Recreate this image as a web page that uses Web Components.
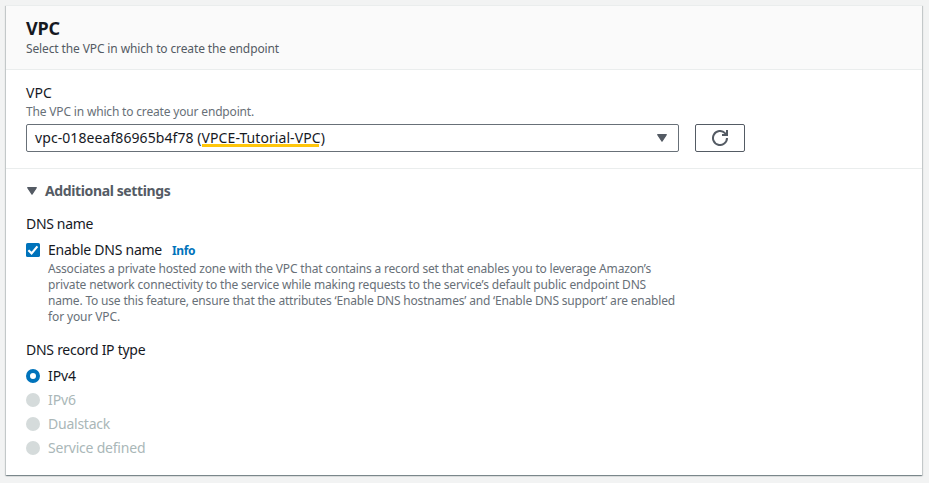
<!DOCTYPE html>
<html lang="en">
<head>
<meta charset="utf-8">
<title>VPC</title>
<style>
html, body { margin: 0; height: 100%; }
body { background: #f2f3f3; font: 14px/22px "Noto Sans", sans-serif; color: #16191f; box-sizing: border-box; padding: 5px 7px 8px 6px; overflow: hidden; }
</style>
</head>
<body>
<vpc-panel>
  <ui-text slot="title" style="--ls:-.2px;font-size:18px;font-weight:700">VPC</ui-text>
  <ui-text slot="subtitle" style="--ls:-.124px">Select the VPC in which to create the endpoint</ui-text>
  <form-field>
    <ui-text slot="label" style="--ls:.09px">VPC</ui-text>
    <ui-text slot="hint" style="--ls:-.172px">The VPC in which to create your endpoint.</ui-text>
    <select-box>
      <ui-text style="--ls:.08px">vpc-018eeaf86965b4f78 (</ui-text><mark-text><ui-text style="--ls:.071px">VPCE-Tutorial-VPC</ui-text></mark-text><ui-text>)</ui-text>
    </select-box>
    <refresh-button slot="action"></refresh-button>
  </form-field>
  <expand-section slot="more">
    <ui-text slot="heading" style="--ls:-.38px">Additional settings</ui-text>
    <option-group>
      <ui-text slot="label" style="--ls:-.336px">DNS name</ui-text>
      <check-option>
        <ui-text style="--ls:-.249px">Enable DNS name</ui-text>
        <ui-text slot="info" style="--ls:-.4px">Info</ui-text>
        <ui-text slot="hint" style="--ls:-.184px">Associates a private hosted zone with the VPC that contains a record set that enables you to leverage Amazon’s</ui-text>
        <ui-text slot="hint" style="--ls:-.169px">private network connectivity to the service while making requests to the service’s default public endpoint DNS</ui-text>
        <ui-text slot="hint" style="--ls:-.181px">name. To use this feature, ensure that the attributes ‘Enable DNS hostnames’ and ‘Enable DNS support’ are enabled</ui-text>
        <ui-text slot="hint" style="--ls:-.124px">for your VPC.</ui-text>
      </check-option>
    </option-group>
    <option-group>
      <ui-text slot="label" style="--ls:-.263px">DNS record IP type</ui-text>
      <radio-option checked><ui-text style="--ls:-.086px">IPv4</ui-text></radio-option>
      <radio-option disabled><ui-text style="--ls:-.086px">IPv6</ui-text></radio-option>
      <radio-option disabled><ui-text style="--ls:-.24px">Dualstack</ui-text></radio-option>
      <radio-option disabled><ui-text style="--ls:-.209px">Service defined</ui-text></radio-option>
    </option-group>
  </expand-section>
</vpc-panel>
<script>
const define = (name, html) => customElements.define(name, class extends HTMLElement {
  constructor() {
    super();
    this.attachShadow({ mode: 'open' }).innerHTML = html;
  }
});

define('ui-text', `<style>
:host { display: block; white-space: nowrap; letter-spacing: var(--ls, 0); }
</style><slot></slot>`);

define('vpc-panel', `<style>
:host { display: flex; flex-direction: column; height: 470px; box-sizing: border-box; background: #fff; border-top: 1px solid #eaeded;
  box-shadow: 0 1px 1px 0 rgba(0,28,36,.3), 1px 1px 1px 0 rgba(0,28,36,.15), -1px 1px 1px 0 rgba(0,28,36,.15); }
header { height: 63px; box-sizing: content-box; background: #fafafa; border-bottom: 1px solid #eaeded; }
.in { padding: 11px 20px 0; }
.sub { font-size: 12px; line-height: 16px; color: #545b64; padding-top: 2px; }
.body { padding: 12px 20px 16px; border-bottom: 1px solid #eaeded; }
.more { padding: 11px 20px 0; }
</style>
<header><div class="in"><slot name="title"></slot><div class="sub"><slot name="subtitle"></slot></div></div></header>
<div class="body"><slot></slot></div>
<div class="more"><slot name="more"></slot></div>`);

define('form-field', `<style>
:host { display: block; }
.hint { font-size: 12px; line-height: 16px; color: #687078; padding-bottom: 4px; }
.row { display: grid; grid-template-columns: 653px 50px; gap: 16px; }
</style><slot name="label"></slot><div class="hint"><slot name="hint"></slot></div>
<div class="row"><slot></slot><slot name="action"></slot></div>`);

define('select-box', `<style>
:host { display: flex; align-items: center; height: 28px; box-sizing: border-box; border: 1px solid #687078; border-radius: 2px; padding: 0 11px 0 8px; }
svg { margin-left: auto; display: block; }
</style><slot></slot>
<svg width="10" height="8" viewBox="0 0 10 8"><path d="M.7.7h8.6L5 7.2z" fill="#545b64" stroke="#545b64" stroke-width="1.2" stroke-linejoin="round"/></svg>`);

define('mark-text', `<style>
:host { display: block; position: relative; }
i { position: absolute; left: 0; right: 2px; top: 17px; height: 3px; background: #ffc60b; }
</style><slot></slot><i></i>`);

define('refresh-button', `<style>
:host { display: flex; align-items: center; justify-content: center; height: 28px; box-sizing: border-box; border: 1px solid #545b64; border-radius: 2px; }
svg { display: block; }
</style>
<svg width="16" height="16" viewBox="0 0 16 16" fill="none" stroke="#545b64" stroke-width="2"><path d="M15 8a7 7 0 1 1-2-4.9L15 5"/><path d="M10 5h5V0"/></svg>`);

define('expand-section', `<style>
:host { display: block; }
.head { display: flex; align-items: center; gap: 8px; padding-left: 1px; font-weight: 700; color: #545b64; }
.content { display: flex; flex-direction: column; gap: 14px; padding-top: 11px; }
</style>
<div class="head"><svg width="10" height="8" viewBox="0 0 10 8"><path d="M.7.7h8.6L5 7.2z" fill="#545b64" stroke="#545b64" stroke-width="1.2" stroke-linejoin="round"/></svg><slot name="heading"></slot></div>
<div class="content"><slot></slot></div>`);

define('option-group', `<style>
:host { display: block; }
.list { display: flex; flex-direction: column; gap: 2px; padding-top: 4px; }
</style><slot name="label"></slot><div class="list"><slot></slot></div>`);

define('check-option', `<style>
:host { display: grid; grid-template-columns: 14px auto; column-gap: 8px; }
svg { display: block; align-self: center; }
.line { display: flex; gap: 10px; height: 22px; }
.info { font-size: 12px; font-weight: 700; line-height: 24px; color: #0073bb; }
.hint { grid-column: 2; font-size: 12px; line-height: 16px; color: #687078; }
</style>
<svg width="14" height="14" viewBox="0 0 14 14"><rect width="14" height="14" rx="1.6" fill="#0073bb"/><path d="M2.4 7.2 5.6 10.4 11.4 3.4" fill="none" stroke="#fff" stroke-width="2.2"/></svg>
<div class="line"><slot></slot><div class="info"><slot name="info"></slot></div></div>
<div class="hint"><slot name="hint"></slot></div>`);

define('radio-option', `<style>
:host { display: flex; align-items: center; gap: 8px; }
:host([disabled]) { color: #aab7b8; }
i { width: 14px; height: 14px; box-sizing: border-box; border-radius: 50%; background: #d5dbdb; }
:host([checked]) i { background: #fff; border: 4px solid #0073bb; }
</style><i></i><slot></slot>`);
</script>
</body>
</html>
